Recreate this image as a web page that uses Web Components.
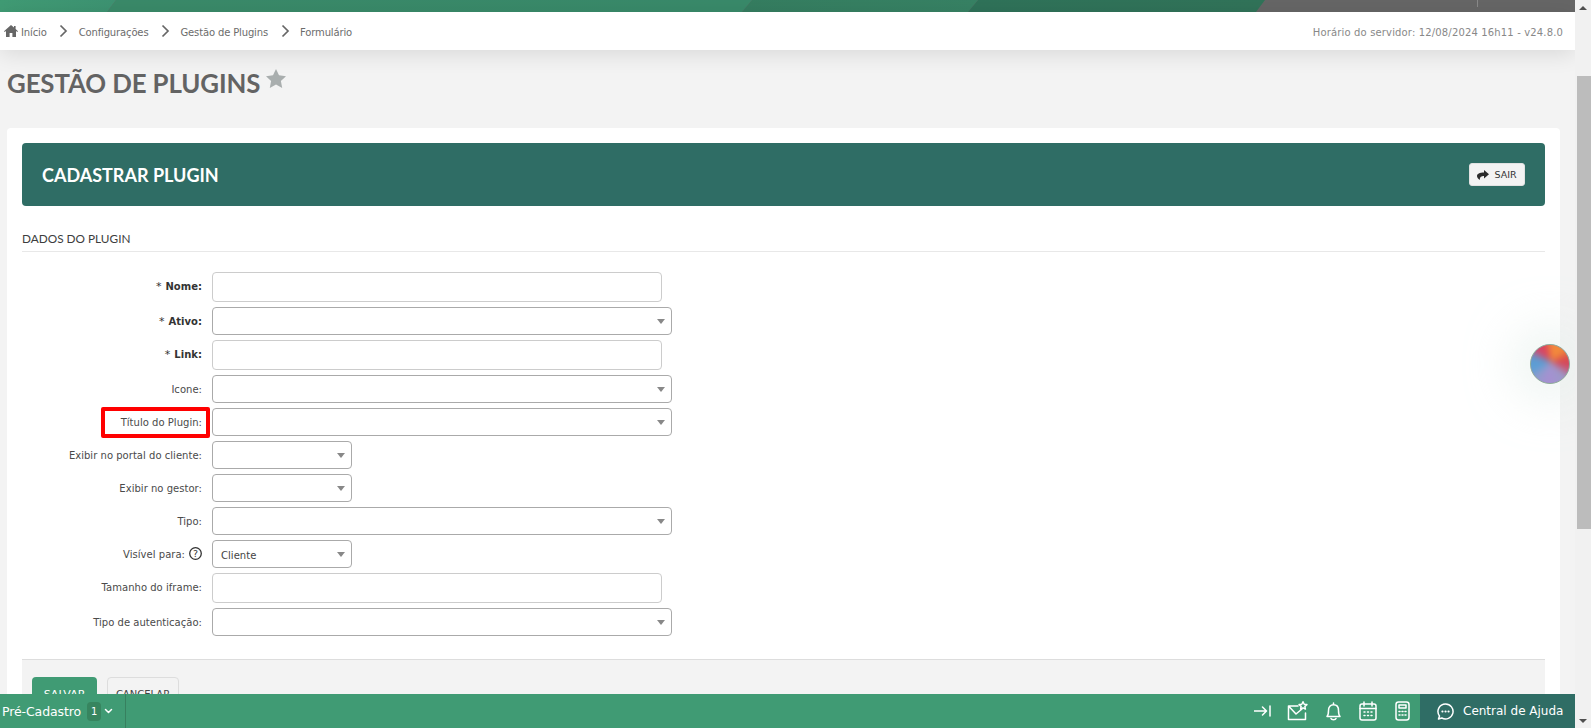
<!DOCTYPE html>
<html lang="pt-BR"><head><meta charset="utf-8"><title>Gestão de Plugins</title>
<style>
html,body{margin:0;padding:0;height:100%;overflow:hidden;background:#f3f3f3;font-family:"DejaVu Sans",sans-serif;}
</style></head><body>
<app-shell>
  <top-band></top-band>
  <bread-crumb></bread-crumb>
  <page-title>GESTÃO DE PLUGINS</page-title>
  <plugin-card>
    <card-header>CADASTRAR PLUGIN</card-header>
    <section-title>DADOS DO PLUGIN</section-title>
    <plugin-field label="Nome" required kind="input"></plugin-field>
    <plugin-field label="Ativo" required kind="select"></plugin-field>
    <plugin-field label="Link" required kind="input"></plugin-field>
    <plugin-field label="Icone" kind="select"></plugin-field>
    <plugin-field label="Título do Plugin" kind="select" marked></plugin-field>
    <plugin-field label="Exibir no portal do cliente" kind="select" size="small"></plugin-field>
    <plugin-field label="Exibir no gestor" kind="select" size="small"></plugin-field>
    <plugin-field label="Tipo" kind="select"></plugin-field>
    <plugin-field label="Visível para" kind="select" size="small" value="Cliente" help></plugin-field>
    <plugin-field label="Tamanho do iframe" kind="input"></plugin-field>
    <plugin-field label="Tipo de autenticação" kind="select"></plugin-field>
    <form-footer></form-footer>
  </plugin-card>
  <orb-widget></orb-widget>
  <bottom-bar></bottom-bar>
</app-shell>
<script>
const def=(name,html,setup)=>customElements.define(name,class extends HTMLElement{
  constructor(){super();this.attachShadow({mode:'open'}).innerHTML=html;}
  connectedCallback(){if(setup)setup(this);}
});
def('app-shell',`<style>
:host{display:flex;height:728px;width:1591px;position:relative;overflow:hidden}
.main{width:1575px;height:728px;overflow:hidden;flex:none;position:relative}
.bar{flex:1;background:#f1f1f1;position:relative;display:flex;flex-direction:column;align-items:flex-end}
.up,.down{height:15px;width:16px;display:flex;align-items:center;justify-content:center;flex:none}
.up::before{content:"";border:4px solid transparent;border-top:0;border-bottom:4px solid #505050}
.down::before{content:"";border:4px solid transparent;border-bottom:0;border-top:4px solid #505050}
.thumb{width:14px;height:453px;background:#bcbcbc;margin-top:61px;flex:none}
.sp{flex:1}
</style><div class="main"><slot></slot></div><div class="bar"><div class="up"></div><div class="thumb"></div><div class="sp"></div><div class="down"></div></div>`);
def('top-band',`<style>:host{display:block;height:12px;background:#666}svg{display:block}</style>
<svg width="1575" height="12" viewBox="0 0 1575 12"><defs>
<linearGradient id="a" x1="0" x2="1"><stop offset="0" stop-color="#409b74"/><stop offset="1" stop-color="#3d9372"/></linearGradient>
<linearGradient id="b" x1="0" x2="1"><stop offset="0" stop-color="#3a8a69"/><stop offset="1" stop-color="#398a6a"/></linearGradient>
<linearGradient id="c" x1="0" x2="1"><stop offset="0" stop-color="#357d60"/><stop offset="1" stop-color="#378264"/></linearGradient>
<linearGradient id="d" x1="0" x2="1"><stop offset="0" stop-color="#2f7259"/><stop offset="1" stop-color="#317359"/></linearGradient></defs>
<polygon points="0,0 116,0 107,12 0,12" fill="url(#a)"/>
<polygon points="116,0 752,0 742,12 107,12" fill="url(#b)"/>
<polygon points="752,0 978,0 968,12 742,12" fill="url(#c)"/>
<polygon points="978,0 1265,0 1256,12 968,12" fill="url(#d)"/>
<rect x="1477" y="0" width="1" height="7" fill="#8a8a8a"/></svg>`);
const chev=`<svg class="c" width="9" height="14" viewBox="0 0 9 14"><path d="M1.500 1.500 7 7l-5.500 5.500" fill="none" stroke="#666" stroke-width="1.700"/></svg>`;
def('bread-crumb',`<style>
:host{display:flex;align-items:center;height:38px;background:#fff;box-shadow:0 4px 22px rgba(0,0,0,.11);position:relative;font-size:10px;color:#6c6c6c;padding:0 12px 0 4px;letter-spacing:-.14px}
.h{margin-right:3px}.c{margin:0 10.500px 0 12.500px}span{white-space:nowrap;position:relative;top:1px}
.r{margin-left:auto;color:#888;letter-spacing:.15px}
</style><svg class="h" width="14" height="12" viewBox="0 0 14 12"><path d="M7 0 0 6.200l.7.800L2 5.900V12h3.600V8h2.800v4H12V5.900L13.300 7l.7-.8L11.600 4V1H10v1.600z" fill="#666"/></svg><span>Início</span>${chev}<span>Configurações</span>${chev}<span>Gestão de Plugins</span>${chev}<span>Formulário</span><span class="r">Horário do servidor: 12/08/2024 16h11 - v24.8.0</span>`);
def('page-title',`<style>
:host{display:flex;align-items:flex-start;height:78px;box-sizing:border-box;padding:16px 0 0 7px;font:700 25.800px/34px Lato,sans-serif;color:#636363;letter-spacing:-.1px}
svg{margin:3px 0 0 6px}
</style><slot></slot><svg width="20" height="19" viewBox="0 0 20 19"><path d="m10 0 3 6.300 7 .9-5.100 4.800 1.300 6.900L10 15.600 3.800 19 5.100 12 0 7.200l7-.9z" fill="#a9aeae"/></svg>`);
def('plugin-card',`<style>
:host{display:block;margin-left:7px;width:1553px;box-sizing:border-box;background:#fff;border-radius:4px 4px 0 0;padding:15px 15px 0;height:700px}
</style><slot></slot>`);
def('card-header',`<style>
:host{display:flex;align-items:center;justify-content:space-between;height:63px;box-sizing:border-box;padding:0 20px;background:#2f6d65;border-radius:4px;color:#fff;font:700 18px Lato,sans-serif}
.b{display:flex;align-items:center;justify-content:center;gap:5px;width:56px;height:23px;box-sizing:border-box;background:#f3f3f3;border:1px solid #e2e2e2;border-radius:3px;color:#333;font:400 9.500px "DejaVu Sans",sans-serif}
</style><span><slot></slot></span><div class="b"><svg width="12" height="10" viewBox="0 0 12 10"><path d="M7 0l5 4.200L7 8.500V6C4.500 6 2.800 6.800 2.800 10 .9 8.800 0 7.300 0 6c0-2.300 2.500-3.600 7-3.600z" fill="#2b2b2b"/></svg>SAIR</div>`);
def('section-title',`<style>
:host{display:block;height:46px;box-sizing:border-box;border-bottom:1px solid #e8e8e8;padding-top:25px;margin-bottom:20px;font:400 11.800px/16px Lato,sans-serif;color:#3d3d3d}
</style><slot></slot>`);
def('plugin-field',`<style>
:host{display:grid;grid-template-columns:180px auto;column-gap:10px;align-items:center;margin-bottom:5px;font-size:10px;color:#4a4a4a;position:relative;justify-content:start;letter-spacing:.03px}
.l{text-align:right;white-space:nowrap;display:flex;justify-content:flex-end;align-items:center}
.l.up{margin-bottom:2px}
.l.req{font-weight:700;color:#333}
.l .s{font-weight:400;margin-right:4px;font-size:11px}
.f{box-sizing:border-box;background:#fff;border-radius:4px;font-size:10px;color:#444;display:flex;align-items:center;padding:0 8px}
.f.input{width:450px;height:30px;border:1px solid #ccc}
.f.select{width:460px;height:28px;border:1px solid #aaa;position:relative}
.f.select.small{width:140px}
.f.select::after{content:"";position:absolute;right:6px;top:11px;border:4px solid transparent;border-bottom:0;border-top:5px solid #888}
.m{position:absolute;left:79px;top:-1px;width:109px;height:31px;box-sizing:border-box;border:4px solid #f00;border-radius:2px;pointer-events:none}
.q{margin-left:4px;position:relative;top:-1px}
.v{position:relative;top:1px}
</style><div class="l"></div><div class="f"></div>`,el=>{
  const s=el.shadowRoot,l=s.querySelector('.l'),f=s.querySelector('.f');
  const kind=el.getAttribute('kind');
  f.classList.add(kind);
  if(kind==='input')l.classList.add('up');
  if(el.getAttribute('size')==='small')f.classList.add('small');
  if(el.hasAttribute('required')){l.classList.add('req');l.innerHTML='<span class="s">*</span>';}
  l.append(el.getAttribute('label')+':');
  if(el.hasAttribute('help'))l.insertAdjacentHTML('beforeend','<svg class="q" width="13" height="13" viewBox="0 0 13 13"><circle cx="6.500" cy="6.500" r="5.800" fill="none" stroke="#333" stroke-width="1.300"/><text x="6.500" y="9.800" font-size="9.500" text-anchor="middle" fill="#333" font-family="DejaVu Sans">?</text></svg>');
  if(el.getAttribute('value'))f.innerHTML='<span class="v">'+el.getAttribute('value')+'</span>';
  if(el.hasAttribute('marked'))s.appendChild(Object.assign(document.createElement('div'),{className:'m'}));
});
def('form-footer',`<style>
:host{display:flex;gap:10px;margin-top:23px;background:#f3f3f3;border-top:1px solid #ddd;padding:17px 10px;height:60px;box-sizing:border-box}
div{box-sizing:border-box;height:34px;border-radius:4px;display:flex;align-items:center;justify-content:center;font-size:10px}
.s{width:65px;background:#409b74;color:#fff;font-size:11px}
.c{width:72px;border:1px solid #ddd;background:#f3f3f3;color:#444}
</style><div class="s">SALVAR</div><div class="c">CANCELAR</div>`);
def('orb-widget',`<style>
:host{position:absolute;left:1530px;top:344px;width:40px;height:40px;border-radius:50%;box-sizing:border-box;border:1px solid #8fae9a;overflow:hidden;background:#9a8fb0;
box-shadow:0 0 40px 22px rgba(232,240,236,.55)}
.g{position:absolute;inset:-6px;filter:blur(3px);background:conic-gradient(from 0deg at 52% 46%,#f58a3c 0deg,#f08a3c 45deg,#d8404f 85deg,#c85a78 115deg,#9a9ac8 135deg,#a78fd2 190deg,#8f9ccc 225deg,#5a9fd6 250deg,#5f9ad0 285deg,#d8486a 310deg,#d8405a 340deg,#f58a3c 360deg)}
</style><div class="g"></div>`);
const ic=(w,h,vb,p,cl='')=>`<svg class="${cl}" width="${w}" height="${h}" viewBox="${vb}" fill="none" stroke="#fff" stroke-width="1.500" stroke-linecap="round" stroke-linejoin="round">${p}</svg>`;
def('bottom-bar',`<style>
:host{position:absolute;left:0;right:0;bottom:0;height:34px;background:#409b74;display:flex;align-items:center;color:#fff;font-size:12.500px}
.p{display:flex;align-items:center;height:34px;width:126px;box-sizing:border-box;border-right:1px solid #37805f;padding-left:2px}
.t{letter-spacing:-.1px}
.b{width:14px;height:19px;margin-left:6px;background:#37855f;border-radius:4px;font-size:10px;display:flex;align-items:center;justify-content:center}
.d{margin-left:3px}
.i{margin-left:auto;display:flex;align-items:center;height:34px}
.h{width:155px;height:34px;background:#2f6d65;display:flex;align-items:center;margin-left:10px;box-sizing:border-box;padding-left:17px;gap:9px;font-size:12px}
svg{display:block}
.a{margin-left:0}.g{margin-left:16px}.g2{margin-left:18px}
</style><div class="p"><span class="t">Pré-Cadastro</span><span class="b">1</span>
${ic(9,6,'0 0 9 6','<path d="M1.500 1.500 4.500 4.500 7.500 1.500"/>','d')}</div>
<div class="i">
${ic(17,12,'0 0 17 12','<path d="M0 6h12M8.500 2l4 4-4 4M16 1v10"/>','a')}
${ic(21,20,'0 0 21 20','<path d="M11 5H1.500v13.500h17V12M1.500 5 9 13l6-5"/><path d="m16 .8 1.200 2.500 2.700.3-2 1.800.5 2.700-2.400-1.300-2.400 1.300.5-2.700-2-1.800 2.700-.3z"/>','g')}
${ic(15,19,'0 0 15 19','<path d="M1 14.500c1.500-1.500 1.500-3 1.500-6C2.500 5 4.500 2.800 7.500 2.800s5 2.200 5 5.700c0 3 0 4.500 1.500 6zM7.500 1v1.800M5 16.500c.5 1.500 4.500 1.500 5 0"/>','g2')}
${ic(18,20,'0 0 18 20','<rect x="1" y="3" width="16" height="16" rx="2"/><path d="M1 7.500h16M5 1v4M13 1v4"/><path d="M5 11h1M8.500 11h1M12 11h1M5 14.500h1M8.500 14.500h1M12 14.500h1"/>','g2')}
${ic(15,20,'0 0 15 20','<rect x="1" y="1" width="13" height="18" rx="2.500"/><rect x="4" y="4" width="7" height="3"/><path d="M4 10.500h1M7 10.500h1M10 10.500h1M4 14h1M7 14h1M10 14h1"/>','g2')}
<div class="h">${ic(17,17,'0 0 17 17','<path d="M8.500 1a7.500 7.500 0 1 1-3.700 14l-3.300 1 1-3A7.500 7.500 0 0 1 8.500 1z"/><path d="M5.300 8.500h.3M8.400 8.500h.3M11.400 8.500h.3" stroke-width="1.900"/>')}<span>Central de Ajuda</span></div></div>`);
</script></body></html>
